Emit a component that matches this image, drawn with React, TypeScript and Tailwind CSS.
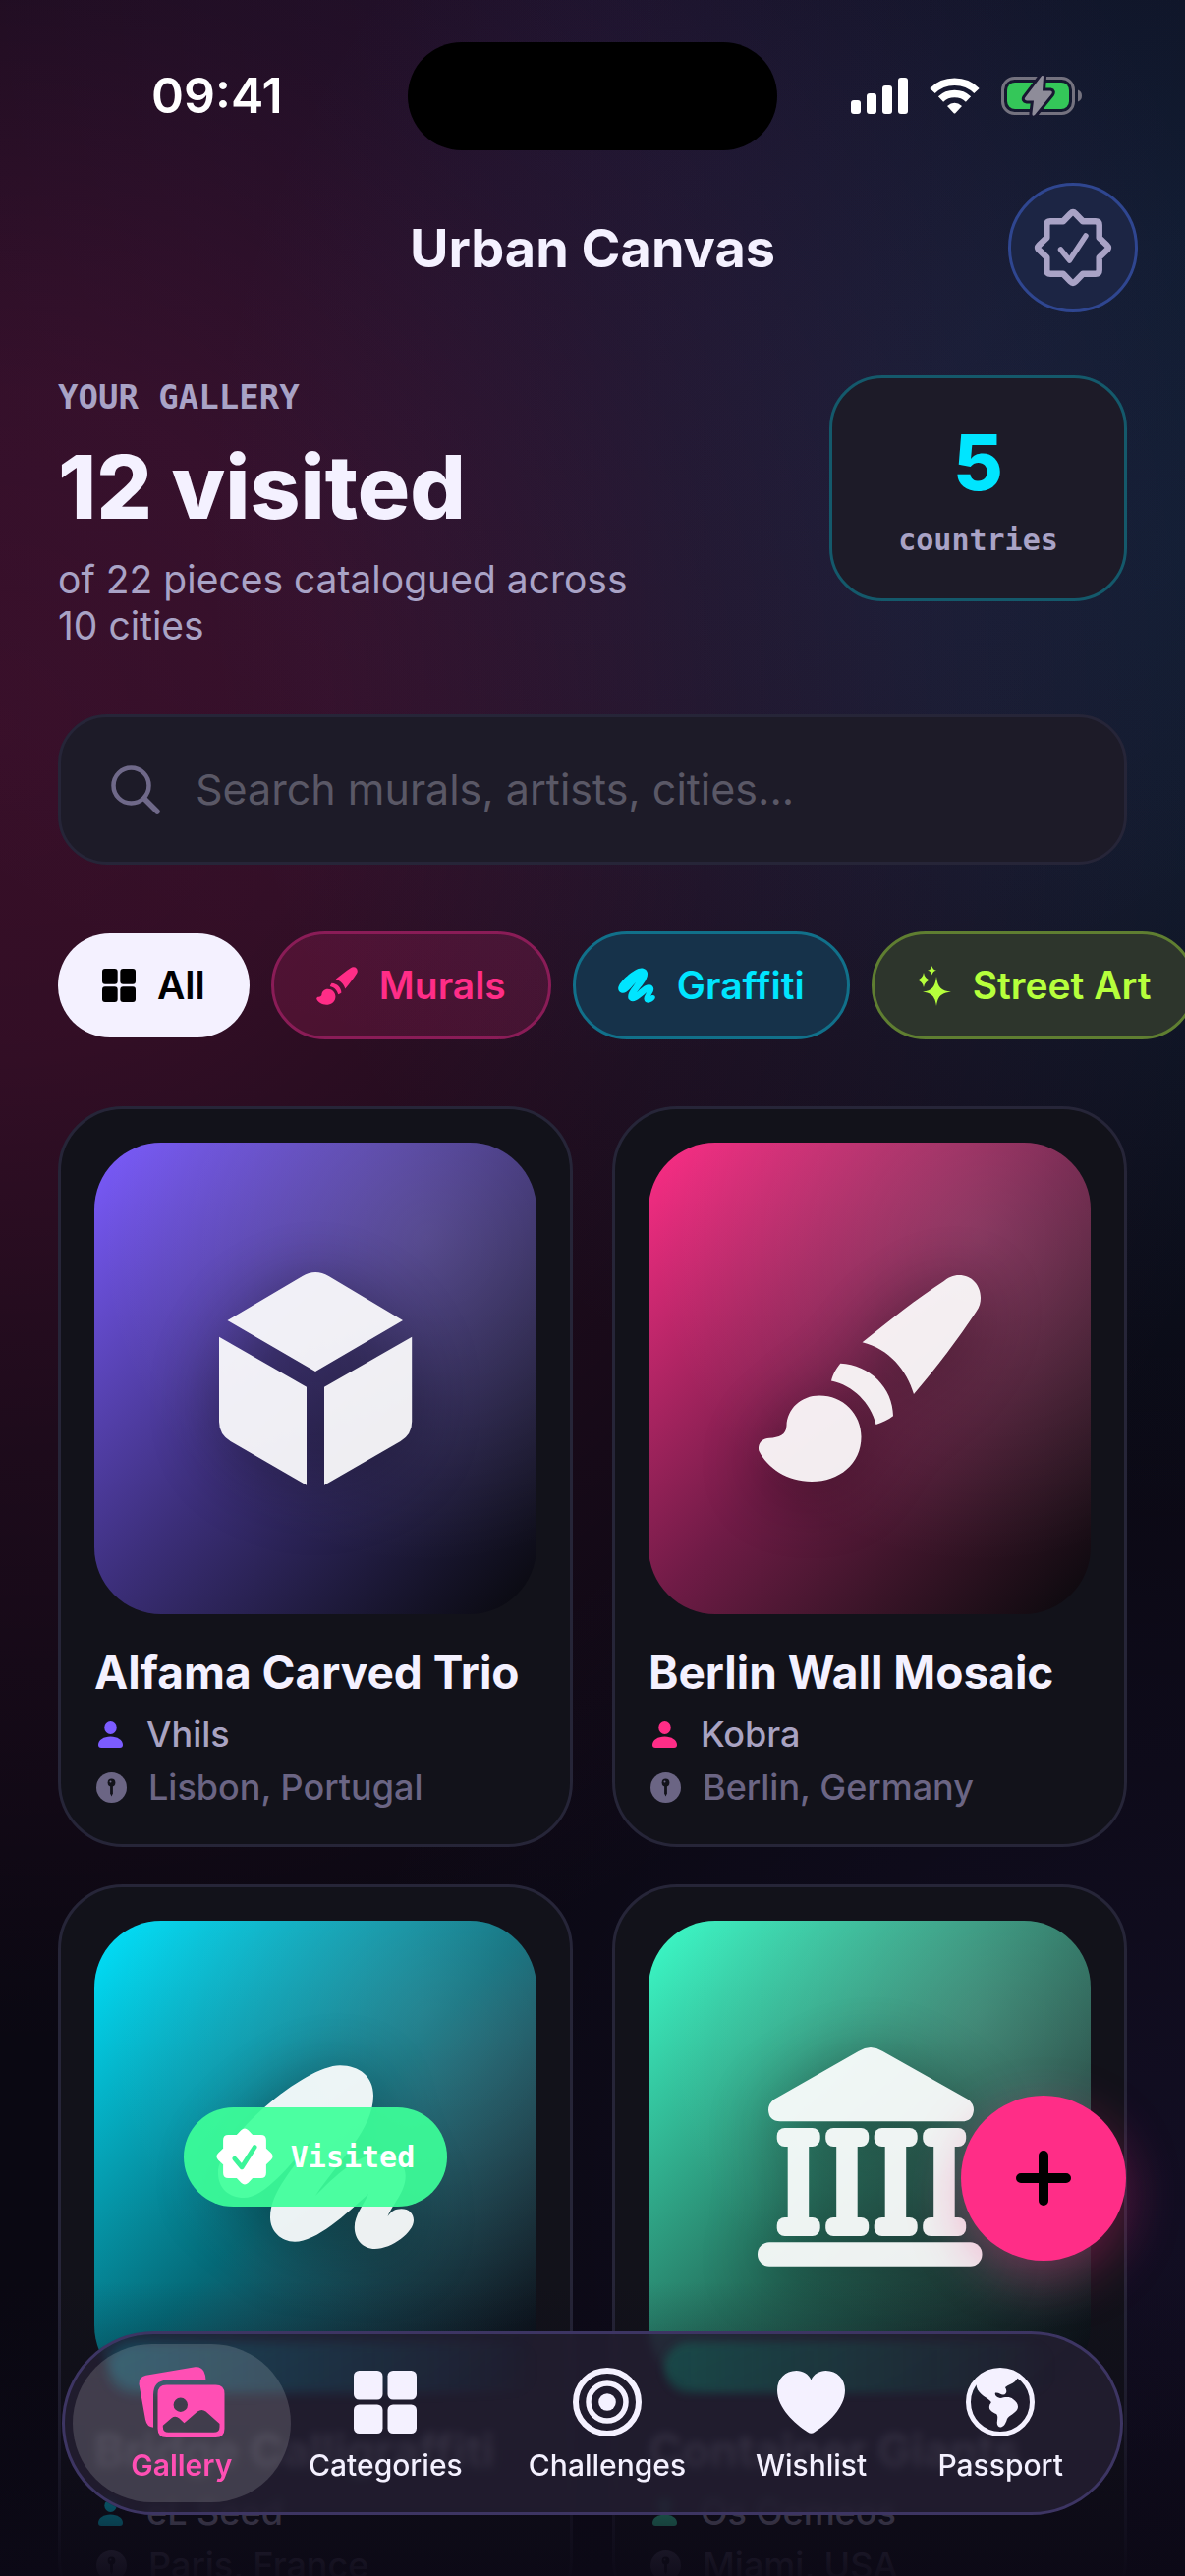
import React from 'react';

interface IconProps {
  className?: string;
}

const BrushIcon: React.FC<IconProps> = ({ className }) => (
  <svg className={className} viewBox="168 198 228 212" fill="currentColor" aria-hidden="true">
    <path d="M274.6 267.3 C301 246 331 222 357.7 205 C362 201.500 367 199 373 199 C386 199 395 209 395 222 C395 227 394 231 390.500 236 C372 264 350 293 327 320 C320 296 302 274 274.600 267.300 Z" />
    <path d="M252.3 288.8 C282 290 306 314 306 342.300 C301 346 295 349 288.500 351 C283 329 265 311 243 306.600 C245 299 248 294 252.300 288.800 Z" />
    <path d="M169 374 C170 368 174 365 180 364.800 C190 364 197 362 197.500 352 C198 335 212 321.400 231 321.400 C255 321.400 273.500 340 273.500 363.500 C273.500 391 251 409 223 409 C198 409 178 395 169.500 378 C169 377 169 375.500 169 374 Z" />
  </svg>
);

const CubeIcon: React.FC<IconProps> = ({ className }) => (
  <svg className={className} viewBox="222 194 198 219" fill="currentColor" aria-hidden="true">
    <path d="M231.500 243.900 L307.700 199 Q321 191 334.600 199 L410 243.900 L321 296 Z" />
    <path d="M223 260.700 L312 311.700 V411.700 L234.600 367 Q223 360 223 347 Z" />
    <path d="M419.200 260.700 L330 311.700 V411.700 L407.600 367 Q419.200 360 419.200 347 Z" />
  </svg>
);

const ScribbleIcon: React.FC<IconProps> = ({ className }) => (
  <svg className={className} viewBox="221 224 201 189" fill="currentColor" aria-hidden="true">
    <path d="M346 225.300 C366 225.300 380 237 380 256 C380 290 345 322 321 358 C341 338 365 315 386 315 C402 315 412.700 325 412.700 338 C412.700 354 400 366 394.600 379 C398 374 402 371.300 408.500 371.300 C416 371.300 421 376 421 383 C421 395 399 412 381.500 412 C369 412 360.800 402 360.800 390 C360.800 378 370 367 375 356 C352 377 322 404.700 300 404.700 C286 404.700 275 394 275 380 C275 353 301 328 317.300 301.700 C296 325 270 360 248 360 C233 360 222 350 222 335 C222 300 310 225.300 346 225.300 Z" />
  </svg>
);

const MuseumIcon: React.FC<IconProps> = ({ className }) => (
  <svg className={className} viewBox="168 202 229 225" fill="currentColor" aria-hidden="true">
    <path d="M271 206.700 Q283 199.500 295 206.700 L382 255.700 Q388 260 388 266.700 Q387 278.300 376 278.300 H191 Q179.500 278 179 266.700 Q179 260 185 255.700 Z" />
    {[187.7, 237.2, 286.7, 336.2].map((x) => (
      <g key={x}>
        <rect x={x} y="285" width="44" height="19" rx="8" />
        <rect x={x + 11} y="294" width="21.500" height="92" />
        <rect x={x} y="376" width="44" height="19" rx="8" />
      </g>
    ))}
    <rect x="168" y="401.300" width="228.500" height="24.400" rx="12" />
  </svg>
);

const SparkleIcon: React.FC<IconProps> = ({ className }) => (
  <svg className={className} viewBox="0 0 35 41" fill="currentColor" aria-hidden="true">
    <path d="M20 11 C21.500 22 24.500 25.500 35 26.500 C24.500 28 21.500 31 20 41 C18.500 31 15.500 28 6 26.500 C15.500 25.500 18.500 22 20 11 Z" />
    <path d="M7 7 Q8 13.500 14 14.500 Q8 15.500 7 22 Q6 15.500 0 14.500 Q6 13.500 7 7 Z" />
    <path d="M15.500 0 Q16.200 4 20 4.800 Q16.200 5.500 15.500 9.500 Q14.800 5.500 11 4.800 Q14.800 4 15.500 0 Z" />
  </svg>
);

const GridIcon: React.FC<IconProps> = ({ className }) => (
  <svg className={className} viewBox="0 0 64 64" fill="currentColor" aria-hidden="true">
    <rect width="29.500" height="29.500" rx="5.500" />
    <rect x="34.500" width="29.500" height="29.500" rx="5.500" />
    <rect y="34.500" width="29.500" height="29.500" rx="5.500" />
    <rect x="34.500" y="34.500" width="29.500" height="29.500" rx="5.500" />
  </svg>
);

const SEAL =
  'M-2.500 -34.500 Q0 -37 2.500 -34.500 L10 -26.700 H23 Q26.700 -26.700 26.700 -23 V-10 L34.500 -2.500 Q37 0 34.500 2.500 L26.700 10 V23 Q26.700 26.700 23 26.700 H10 L2.500 34.500 Q0 37 -2.500 34.500 L-10 26.700 H-23 Q-26.700 26.700 -26.700 23 V10 L-34.500 2.500 Q-37 0 -34.500 -2.500 L-26.700 -10 V-23 Q-26.700 -26.700 -23 -26.700 H-10 Z';

const SealIcon: React.FC<IconProps> = ({ className }) => (
  <svg className={className} viewBox="-40 -40 80 80" fill="none" stroke="currentColor" strokeWidth="6.500" strokeLinecap="round" strokeLinejoin="round" aria-hidden="true">
    <path d={SEAL} />
    <path d="M-12.500 2 L-3.500 13 L13 -12" strokeWidth="5.500" />
  </svg>
);

const SealFillIcon: React.FC<IconProps> = ({ className }) => (
  <svg className={className} viewBox="-40 -40 80 80" strokeLinecap="round" strokeLinejoin="round" aria-hidden="true">
    <path d={SEAL} fill="currentColor" stroke="currentColor" strokeWidth="7" />
    <path d="M-14 3 L-4 15 L14 -13" fill="none" stroke="#3cf599" strokeWidth="6.500" />
  </svg>
);

const PersonIcon: React.FC<IconProps> = ({ className }) => (
  <svg className={className} viewBox="0 0 25 27" fill="currentColor" aria-hidden="true">
    <ellipse cx="12.500" cy="6.500" rx="6.200" ry="6.500" />
    <path d="M0 24 C0 19 5.500 15.500 12.500 15.500 C19.500 15.500 25 19 25 24 C25 26 24 27 22 27 H3 C1 27 0 26 0 24 Z" />
  </svg>
);

const PinIcon: React.FC<IconProps> = ({ className }) => (
  <svg className={className} viewBox="0 0 31 31" aria-hidden="true">
    <circle cx="15.500" cy="15.500" r="15.500" fill="currentColor" />
    <circle cx="15.500" cy="10.500" r="3.900" fill="#12121a" />
    <path d="M14.100 13 H16.900 V21.500 L15.500 24.500 L14.100 21.500 Z" fill="#12121a" />
    <circle cx="14.500" cy="9.500" r="1" fill="currentColor" />
  </svg>
);

const PhotosIcon: React.FC<IconProps> = ({ className }) => (
  <svg className={className} viewBox="83.500 46.500 88 73.500" fill="currentColor" aria-hidden="true">
    <path d="M84 65 Q83.500 57.500 91 56 L141 47.600 Q147 46.800 150 52 Q152 56 152 61 H112 Q98.500 61.500 98.500 76 V109 Q92 108.500 90.500 101 Z" />
    <path
      fillRule="evenodd"
      d="M112 65.700 H162 Q171 65.700 171 74.700 V110.300 Q171 119.300 162 119.300 H112 Q103 119.300 103 110.300 V74.700 Q103 65.700 112 65.700 Z M126.300 78.800 A7.200 7.200 0 1 0 126.300 93.200 A7.200 7.200 0 1 0 126.300 78.800 Z M108.300 107 L117 99.500 Q121 96.500 125 99.800 L130 104.500 L143.500 92.800 Q148 89.500 152 92.800 L166 105.200 V108.500 Q166 114 160 114 H114 Q108.300 114 108.300 108.500 Z"
    />
  </svg>
);

const TargetIcon: React.FC<IconProps> = ({ className }) => (
  <svg className={className} viewBox="-35 -35 70 70" fill="none" stroke="currentColor" aria-hidden="true">
    <circle r="32" strokeWidth="6" />
    <circle r="19" strokeWidth="5.500" />
    <circle r="8.800" fill="currentColor" stroke="none" />
  </svg>
);

const HeartIcon: React.FC<IconProps> = ({ className }) => (
  <svg className={className} viewBox="0 0 69 64" fill="currentColor" aria-hidden="true">
    <path d="M34.500 9.500 C37 3.500 43 0 49.500 0 C61 0 69 8.500 69 20 C69 38 51 54 38 62.500 Q34.500 65 31 62.500 C18 54 0 38 0 20 C0 8.500 8 0 19.500 0 C26 0 32 3.500 34.500 9.500 Z" />
  </svg>
);

const GlobeIcon: React.FC<IconProps> = ({ className }) => (
  <svg className={className} viewBox="-35 -35 70 70" fill="currentColor" aria-hidden="true">
    <circle r="32.500" fill="none" stroke="currentColor" strokeWidth="5" />
    <path d="M-25 -20 C-14 -35 8 -36 19 -26 L15 -21 C12 -18 8 -18 5 -15 C7 -12 7 -8 3 -7.500 C0 -7.500 -1 -10 -5 -9.500 C-6 -7 -4 -5 0 -4 C4 -5 10 -6 13 -3 C17 0 19 3 17.500 7 C15 12 9 13 7 17 C6 20 5 24 1 25.500 C-2 26 -4 23 -3 19 C-3 17 -2 14 -4 12 C-8 10 -12 8 -11 4 C-11 1 -8 1 -10 -1 C-14 -5 -22 -8 -24 -15 Z" />
  </svg>
);

const SignalIcon = () => (
  <svg className="h-[37px] w-[58px]" viewBox="0 0 58 37" fill="white" aria-hidden="true">
    <rect y="23" width="10" height="14" rx="3" />
    <rect x="16" y="16" width="10" height="21" rx="3" />
    <rect x="32" y="8" width="10" height="29" rx="3" />
    <rect x="48" width="10" height="37" rx="3" />
  </svg>
);

const WifiIcon = () => (
  <svg className="h-[37px] w-[51px]" viewBox="0 0 51 37" fill="none" stroke="white" strokeWidth="7.500" aria-hidden="true">
    <path d="M3 13.500 C15 1.200 36 1.200 48 13.500" />
    <path d="M11.500 22 C19 14.800 32 14.800 39.500 22" />
    <path d="M18 29 Q25.500 22.500 33 29 L26.500 36 Q25.500 37 24.500 36 Z" fill="white" stroke="none" />
  </svg>
);

const BatteryIcon = () => (
  <svg className="h-[41px] w-[82px]" viewBox="0 0 82 41" aria-hidden="true">
    <rect x="1.500" y="2.500" width="72" height="36" rx="12" fill="none" stroke="#74727f" strokeWidth="3" />
    <path d="M78 14.500 Q82 16 82 20.500 Q82 25 78 26.500 Z" fill="#74727f" />
    <rect x="6" y="7" width="63" height="27" rx="8" fill="#34c759" />
    <path
      d="M43 1 L42 15.500 H50 Q53 16 51 19 L34 40 Q31 42 31.500 38 L33 25.500 H26 Q22.500 25 24.500 22 L40.500 1 Q42.500 -1.500 43 1 Z"
      fill="#8e8c99"
      stroke="#181731"
      strokeWidth="6"
      paintOrder="stroke"
    />
  </svg>
);

interface Chip {
  label: string;
  icon: React.ReactNode;
  style: string;
}

const chips: Chip[] = [
  { label: 'All', icon: <GridIcon className="h-[34px] w-[34px]" />, style: 'h-[106px] bg-[#f4f1ff] px-[45px] text-black' },
  { label: 'Murals', icon: <BrushIcon className="h-[39px] w-[42px]" />, style: 'h-[110px] border-[3px] border-[#8a1c57] bg-[#ff2d87]/15 px-[43px] text-[#ff2d87]' },
  { label: 'Graffiti', icon: <ScribbleIcon className="h-[36px] w-[38px]" />, style: 'h-[110px] border-[3px] border-[#11708a] bg-[#16324a] px-[43px] text-[#00e5ff]' },
  { label: 'Street Art', icon: <SparkleIcon className="h-[41px] w-[35px]" />, style: 'h-[110px] border-[3px] border-[#5f7e31] bg-[#2d352c] px-[43px] text-[#b6ff3c]' },
];

interface Artwork {
  title: string;
  artist: string;
  place: string;
  icon: React.ReactNode;
  cover: string;
  accent: string;
  visited?: boolean;
}

const artworks: Artwork[] = [
  { title: 'Alfama Carved Trio', artist: 'Vhils', place: 'Lisbon, Portugal', icon: <CubeIcon className="h-[219px] w-[198px]" />, cover: 'from-[#7c5cff] via-[#3b2e78] to-[#08080c]', accent: 'text-[#7c5cff]' },
  { title: 'Berlin Wall Mosaic', artist: 'Kobra', place: 'Berlin, Germany', icon: <BrushIcon className="h-[212px] w-[228px]" />, cover: 'from-[#ff2d87] via-[#6f1b46] to-[#08080c]', accent: 'text-[#ff2d87]' },
  { title: 'Bridge Calligraffiti', artist: 'eL Seed', place: 'Paris, France', icon: <ScribbleIcon className="h-[189px] w-[201px]" />, cover: 'from-[#00e5ff] via-[#056a78] to-[#080810]', accent: 'text-[#00e5ff]', visited: true },
  { title: 'Container Giants', artist: 'Os Gemeos', place: 'Miami, USA', icon: <MuseumIcon className="h-[225px] w-[229px]" />, cover: 'from-[#3cffcb] via-[#25725f] to-[#080810]', accent: 'text-[#3cf5b9]' },
];

const tabs = [
  { label: 'Gallery', icon: <PhotosIcon className="h-[74px] w-[88px]" />, basis: 'basis-[189px]', active: true },
  { label: 'Categories', icon: <GridIcon className="h-[64px] w-[64px]" />, basis: 'basis-[225px]', active: false },
  { label: 'Challenges', icon: <TargetIcon className="h-[70px] w-[70px]" />, basis: 'basis-[225px]', active: false },
  { label: 'Wishlist', icon: <HeartIcon className="h-[64px] w-[69px]" />, basis: 'basis-[189px]', active: false },
  { label: 'Passport', icon: <GlobeIcon className="h-[70px] w-[70px]" />, basis: 'basis-[195px]', active: false },
];

const ArtworkCard: React.FC<{ artwork: Artwork }> = ({ artwork }) => (
  <article className="rounded-[66px] border-[3px] border-[#262538] bg-[#12121a] p-[34px]">
    <div className={`relative flex h-[480px] items-center justify-center overflow-hidden rounded-[68px] bg-linear-to-br ${artwork.cover}`}>
      <div className="absolute inset-0 bg-[radial-gradient(circle_at_75%_20%,rgba(255,255,255,0.13),transparent_65%)]" />
      <div className="relative text-white opacity-92 drop-shadow-[0_12px_36px_rgba(0,0,0,0.45)]">{artwork.icon}</div>
      {artwork.visited && (
        <span className="absolute flex h-[101px] items-center gap-[18px] rounded-full bg-[#3dff99]/92 px-[33px] font-['DejaVu_Sans_Mono',monospace] text-[30px] font-bold text-white">
          <SealFillIcon className="h-[58px] w-[58px]" />
          Visited
        </span>
      )}
    </div>
    <h2 className="mt-7 text-[46px] leading-[62px] font-bold whitespace-nowrap text-[#f4f1ff]">{artwork.title}</h2>
    <p className="mt-2 flex items-center gap-6 text-[36px] leading-[48px] font-medium text-[#a9a3c2]">
      <PersonIcon className={`ml-1 h-[27px] w-[25px] ${artwork.accent}`} />
      {artwork.artist}
    </p>
    <p className="mt-1.5 flex items-center gap-[22px] text-[36px] leading-[48px] font-medium text-[#6b6584]">
      <PinIcon className="ml-0.5 h-[31px] w-[31px]" />
      {artwork.place}
    </p>
  </article>
);

const App: React.FC = () => {
  return (
    <div className="relative h-screen overflow-hidden bg-[#0a0812] bg-[radial-gradient(circle_1350px_at_0%_28%,rgba(255,45,135,0.19),rgba(255,45,135,0.165)_25%,rgba(255,45,135,0.08)_55%,transparent),radial-gradient(circle_1000px_at_100%_21%,rgba(40,150,220,0.15),rgba(40,150,220,0.13)_30%,rgba(40,150,220,0.05)_70%,transparent),radial-gradient(circle_1100px_at_50%_0%,rgba(124,92,255,0.08),transparent),radial-gradient(circle_900px_at_100%_86%,rgba(124,92,255,0.07),transparent)] font-['Inter','Liberation_Sans',sans-serif]">
      <div className="grid h-[186px] grid-cols-3 items-center pt-[9px] text-white">
        <span className="pl-[154px] text-[50px] font-semibold">09:41</span>
        <div className="h-[110px] w-[376px] justify-self-center rounded-full bg-black" />
        <div className="flex items-center justify-end gap-[22px] pr-[105px]">
          <SignalIcon />
          <WifiIcon />
          <BatteryIcon />
        </div>
      </div>

      <header className="grid grid-cols-[132px_1fr_132px] items-center px-12">
        <h1 className="col-start-2 text-center text-[54px] font-bold text-[#f4f1ff]">Urban Canvas</h1>
        <button type="button" aria-label="Achievements" className="flex h-[132px] w-[132px] items-center justify-center rounded-full border-[3px] border-[#2f4690] bg-[#1c2544] text-[#a9a3c6]">
          <SealIcon className="h-20 w-20" />
        </button>
      </header>

      <main className="px-[59px] pt-16">
        <section className="flex items-start justify-between">
          <div className="flex max-w-[620px] flex-col gap-4">
            <p className="font-['DejaVu_Sans_Mono',monospace] text-[34px] leading-[44px] font-bold text-[#a9a3c6]">YOUR GALLERY</p>
            <p className="text-[89px] leading-[108px] font-extrabold text-[#f4f1ff]">12 visited</p>
            <p className="text-[39px] leading-[47px] text-[#a9a3c6]">of 22 pieces catalogued across 10 cities</p>
          </div>
          <div className="flex h-[230px] w-[303px] flex-col items-center justify-center rounded-[54px] border-[3px] border-[#14596b] bg-[#1d1b28]">
            <span className="text-[78px] leading-[94px] font-extrabold text-[#00e5ff]">5</span>
            <span className="mt-3 font-['DejaVu_Sans_Mono',monospace] text-[30px] leading-[40px] font-bold text-[#a9a3c6]">countries</span>
          </div>
        </section>

        <label className="mt-[67px] flex h-[153px] items-center gap-9 rounded-[50px] border-[3px] border-[#262538] bg-[#1d1b28] px-[51px]">
          <svg className="h-[50px] w-[50px] shrink-0" viewBox="0 0 50 50" fill="none" stroke="#6f6989" strokeWidth="4.500" strokeLinecap="round" aria-hidden="true">
            <circle cx="20.500" cy="20.500" r="18" />
            <path d="M34 34 L47 47" strokeWidth="5.500" />
          </svg>
          <input type="search" aria-label="Search" placeholder="Search murals, artists, cities..." className="w-full bg-transparent text-[43px] text-white outline-none placeholder:text-[#5a5866]" />
        </label>

        <div className="-mr-[60px] mt-[68px] flex items-center gap-[22px] overflow-hidden">
          {chips.map((chip) => (
            <button key={chip.label} type="button" className={`flex shrink-0 items-center gap-[22px] rounded-full text-[39px] font-semibold ${chip.style}`}>
              {chip.icon}
              {chip.label}
            </button>
          ))}
        </div>

        <section className="mt-[68px] grid grid-cols-2 gap-x-10 gap-y-[38px]">
          {artworks.map((artwork) => (
            <ArtworkCard key={artwork.title} artwork={artwork} />
          ))}
        </section>
      </main>

      <div className="pointer-events-none absolute inset-x-0 bottom-0 h-[300px] bg-linear-to-b from-transparent via-[#0c0916]/40 via-50% to-[#0c0916]/95" />

      <button type="button" aria-label="Add artwork" className="absolute right-[60px] bottom-[321px] flex h-[168px] w-[168px] items-center justify-center rounded-full bg-[#ff2d87] shadow-[0_18px_54px_rgba(255,45,135,0.35)]">
        <svg className="h-14 w-14" viewBox="0 0 56 56" stroke="black" strokeWidth="10" strokeLinecap="round" aria-hidden="true">
          <path d="M28 5 V51 M5 28 H51" />
        </svg>
      </button>

      <nav className="absolute inset-x-[63px] bottom-[62px] flex h-[187px] items-center overflow-hidden rounded-full border-[3px] border-[#3d3563] bg-[#231f31]/85 px-6 backdrop-blur-[4px]">
        <div className="absolute top-2 left-11 h-[52px] w-[440px] rounded-full bg-linear-to-r from-[#00c8e0]/20 to-transparent blur-[6px]" />
        <div className="absolute top-2 left-[610px] h-[52px] w-[400px] rounded-full bg-linear-to-r from-[#00a880]/25 to-transparent blur-[4px]" />
        {tabs.map((tab) => (
          <a
            key={tab.label}
            href={`#${tab.label.toLowerCase()}`}
            className={`relative flex h-[161px] shrink grow flex-col items-center justify-end pb-5 text-[30px] leading-[36px] ${tab.basis} ${tab.active ? 'font-semibold text-[#ff4fb4]' : 'font-medium text-[#f4f1ff]'}`}
          >
            {tab.active && <span className="absolute -inset-x-4 inset-y-0 rounded-full bg-white/15" />}
            <span className="relative mb-1.5 flex h-[80px] items-center">{tab.icon}</span>
            <span className="relative">{tab.label}</span>
          </a>
        ))}
      </nav>
    </div>
  );
};

export default App;
